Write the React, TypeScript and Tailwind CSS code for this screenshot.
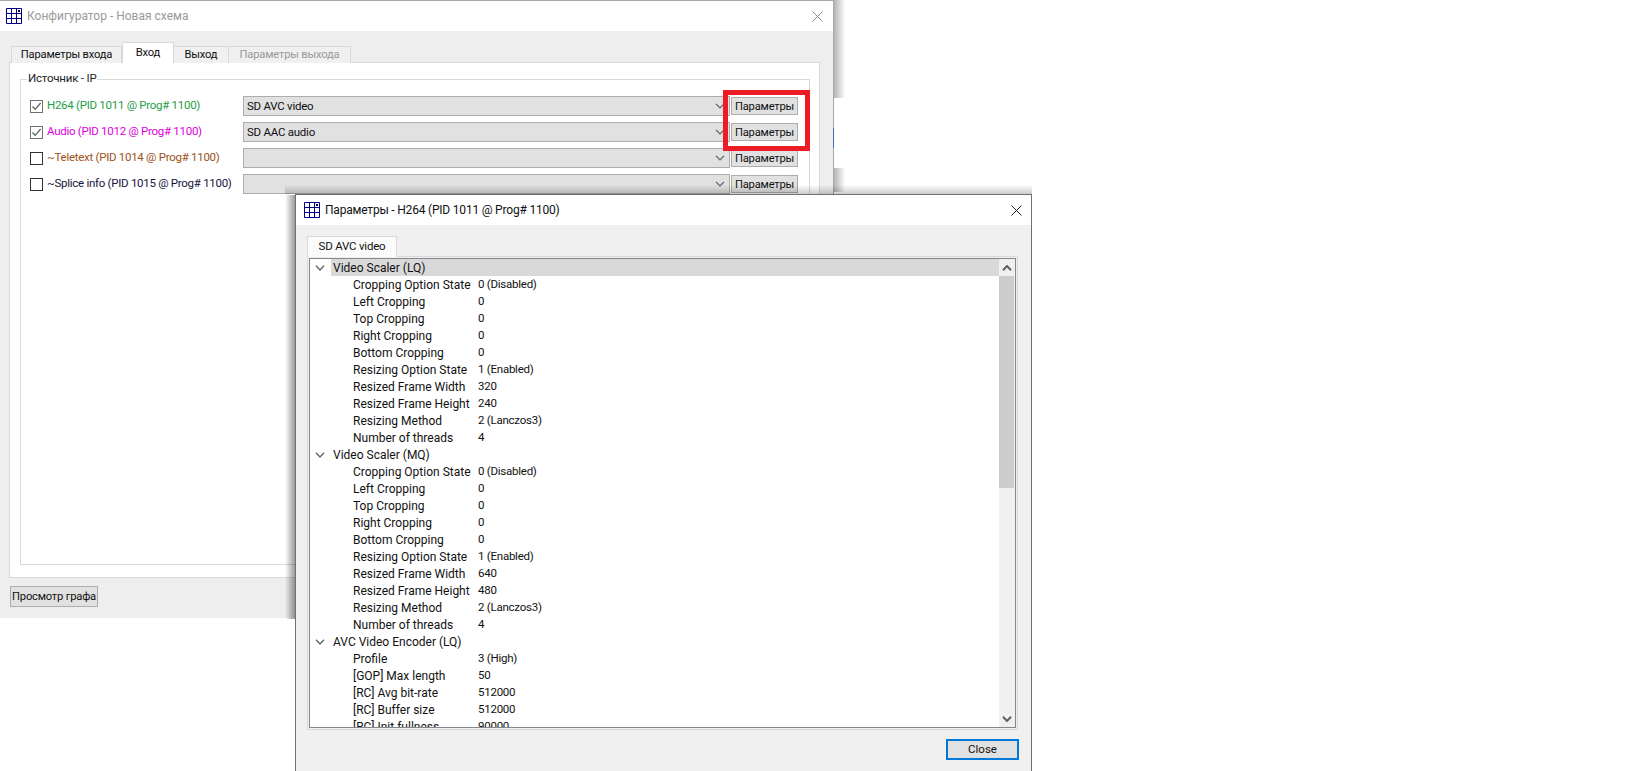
const font = "font-['Roboto',sans-serif] text-[11.5px] leading-none";

function GridIcon() {
  return (
    <svg width="16" height="16" viewBox="0 0 16 16" className="shrink-0">
      <path d="M.5.5h15v15H.5zM5.5.5v15M10.5.5v15M.5 5.5h15M.5 10.5h15" fill="none" stroke="#000080" strokeWidth="1" />
      <rect x="12" y="2" width="2" height="2" fill="#000080" />
    </svg>
  );
}

function Chevron({ className = "", up = false, color = "#606060", w = 1.2 }: { className?: string; up?: boolean; color?: string; w?: number }) {
  return (
    <svg width="10" height="6" viewBox="0 0 10 6" className={className}>
      <path d={up ? "M1 5.2 5 1l4 4.2" : "M1 .8 5 5l4-4.2"} fill="none" stroke={color} strokeWidth={w} />
    </svg>
  );
}

function Btn({ children, w, h, pad = "pt-[1px]" }: { children: string; w: string; h: string; pad?: string }) {
  return (
    <div className={`${w} ${h} ${pad} flex items-center justify-center whitespace-nowrap border border-[#adadad] bg-[#e1e1e1] text-[11.2px] tracking-[-0.2px] text-[#101010]`}>{children}</div>
  );
}

const sources = [
  { label: "H264 (PID 1011 @ Prog# 1100)", color: "text-[#1f9d45]", checked: true, value: "SD AVC video" },
  { label: "Audio (PID 1012 @ Prog# 1100)", color: "text-[#dc00dc]", checked: true, value: "SD AAC audio" },
  { label: "~Teletext (PID 1014 @ Prog# 1100)", color: "text-[#9c5217]", checked: false, value: "" },
  { label: "~Splice info (PID 1015 @ Prog# 1100)", color: "text-[#14143c]", checked: false, value: "" },
];

function SourceRow({ s }: { s: (typeof sources)[number] }) {
  return (
    <div className="flex h-5 items-center">
      <div className="flex w-[213px] shrink-0 items-center gap-[4px]">
        <div className={`flex h-[13px] w-[13px] shrink-0 items-center justify-center border bg-white ${s.checked ? "border-[#707070]" : "border-[#333333]"}`}>
          {s.checked && (
            <svg width="11" height="11" viewBox="0 0 11 11">
              <path d="M1.5 5.5 4.2 8.3 9.6 2" fill="none" stroke="#606060" strokeWidth="1.3" />
            </svg>
          )}
        </div>
        <span className={`${s.color} whitespace-nowrap tracking-[-0.28px]`}>{s.label}</span>
      </div>
      <div className="flex h-5 w-[487px] items-center justify-between border border-[#adadad] bg-[#e1e1e1] pl-[3px] pr-[4px] text-[11.5px] tracking-[-0.25px] text-[#101010]">
        <span className="pt-[2px]">{s.value}</span>
        <Chevron />
      </div>
      <div className="ml-[1px]">
        <Btn w="w-[67px]" h="h-[18px]" pad="pt-[2px]">Параметры</Btn>
      </div>
    </div>
  );
}

type TreeRow = { g?: boolean; k: string; v?: string; sel?: boolean };

const scaler = (name: string, w: string, h: string, sel = false): TreeRow[] => [
  { g: true, k: name, sel },
  { k: "Cropping Option State", v: "0 (Disabled)" },
  { k: "Left Cropping", v: "0" },
  { k: "Top Cropping", v: "0" },
  { k: "Right Cropping", v: "0" },
  { k: "Bottom Cropping", v: "0" },
  { k: "Resizing Option State", v: "1 (Enabled)" },
  { k: "Resized Frame Width", v: w },
  { k: "Resized Frame Height", v: h },
  { k: "Resizing Method", v: "2 (Lanczos3)" },
  { k: "Number of threads", v: "4" },
];

const rows: TreeRow[] = [
  ...scaler("Video Scaler (LQ)", "320", "240", true),
  ...scaler("Video Scaler (MQ)", "640", "480"),
  { g: true, k: "AVC Video Encoder (LQ)" },
  { k: "Profile", v: "3 (High)" },
  { k: "[GOP] Max length", v: "50" },
  { k: "[RC] Avg bit-rate", v: "512000" },
  { k: "[RC] Buffer size", v: "512000" },
  { k: "[RC] Init fullness", v: "90000" },
];

function Row({ r }: { r: TreeRow }) {
  if (r.g) {
    return (
      <div className="flex h-[17px] shrink-0 items-center pl-[5px] text-[12px] text-[#111111]">
        <Chevron color="#666666" w={1.4} />
        <div className={`ml-[6px] flex h-[17px] flex-1 items-center pl-[2px] ${r.sel ? "bg-[#d9d9d9]" : ""}`}>{r.k}</div>
      </div>
    );
  }
  return (
    <div className="flex h-[17px] shrink-0 items-center pl-[43px] text-[12px] text-[#111111]">
      <span className="w-[125px] whitespace-nowrap">{r.k}</span>
      <span className="text-[11.5px] tracking-[-0.25px]">{r.v}</span>
    </div>
  );
}

function MainWindow() {
  return (
    <div className="absolute left-0 top-0 flex h-[618px] w-[834px] flex-col border-r border-t border-[#a8a8a8]">
      <div className="flex h-[30px] shrink-0 items-center bg-white pl-[6px] pr-[10px] text-[12px] text-[#9a9a9a]">
        <GridIcon />
        <span className="ml-[5px] flex-1">Конфигуратор - Новая схема</span>
        <svg width="11" height="11" viewBox="0 0 11 11"><path d="M.5.5l10 10M10.5.5l-10 10" stroke="#8a8a8a" fill="none" /></svg>
      </div>
      <div className="flex flex-1 flex-col bg-[#eeeeee] pl-[9px] pr-[14px] pt-[11px]">
        <div className="relative z-10 flex h-[21px] items-end pl-[2px] text-[11.2px] tracking-[-0.2px]">
          <div className="flex h-[17px] w-[111px] items-center justify-center border border-b-0 border-[#d9d9d9] bg-[#f0f0f0] text-[#111111]">Параметры входа</div>
          <div className="flex h-[21px] w-[52px] items-center justify-center border border-b-0 border-[#d9d9d9] bg-white pb-[1px] text-[#111111]">Вход</div>
          <div className="flex h-[17px] w-[55px] items-center justify-center border border-b-0 border-l-0 border-[#d9d9d9] bg-[#f0f0f0] text-[#111111]">Выход</div>
          <div className="flex h-[17px] w-[122px] items-center justify-center border border-b-0 border-l-0 border-[#d9d9d9] bg-[#f0f0f0] text-[#9a9a9a]">Параметры выхода</div>
        </div>
        <div className="-mt-px h-[516px] w-[811px] border border-[#d9d9d9] bg-white pl-[10px] pr-[9px] pt-[16px]">
          <div className="relative h-[486px] w-[790px] border border-[#d9d9d9] pl-[9px] pt-[16px]">
            <span className="absolute -top-[7px] left-[6px] bg-white px-[1px] tracking-[-0.2px] text-[#222222]">Источник - IP</span>
            <div className="flex flex-col gap-[6px]">
              {sources.map((s) => <SourceRow key={s.label} s={s} />)}
            </div>
          </div>
        </div>
        <div className="ml-[1px] mt-[8px]">
          <Btn w="w-[88px]" h="h-[21px]">Просмотр графа</Btn>
        </div>
      </div>
      {/* annotation */}
      <div className="absolute left-[723px] top-[89px] h-[61px] w-[87px] border-[5px] border-[#ed1c24]" />
      {/* window shadow pieces */}
      <div className="absolute left-[834px] top-[-1px] h-[98px] w-[11px] bg-linear-to-r from-[#b4b4b4] to-white" />
      <div className="absolute left-[834px] top-[167px] h-[24px] w-[11px] bg-linear-to-r from-[#b4b4b4] to-white" />
      <div className="absolute left-[833px] top-[127px] h-[20px] w-[1px] bg-[#3f6fb0]" />
    </div>
  );
}

function ParamWindow() {
  return (
    <div className="absolute left-[295px] top-[194px] flex h-[577px] w-[737px] flex-col border-x border-t border-[#707070]">
      <div className="absolute -left-[11px] top-0 h-[424px] w-[10px] bg-linear-to-l from-black/40 to-transparent" />
      <div className="absolute -left-[11px] -top-[10px] h-[9px] w-[747px] bg-linear-to-t from-black/20 to-transparent" />
      <div className="flex h-[30px] shrink-0 items-center bg-white pl-[8px] pr-[9px] text-[12px] tracking-[-0.2px] text-[#111111]">
        <GridIcon />
        <span className="ml-[5px] flex-1">Параметры - H264 (PID 1011 @ Prog# 1100)</span>
        <svg width="11" height="11" viewBox="0 0 11 11"><path d="M.5.5l10 10M10.5.5l-10 10" stroke="#222222" fill="none" /></svg>
      </div>
      <div className="flex flex-1 flex-col bg-[#f0f0f0] pl-[11px] pt-[11px]">
        <div className="relative z-10 -mb-px flex h-[21px] w-[90px] items-center justify-center border border-b-0 border-[#d9d9d9] bg-[#fbfbfb] tracking-[-0.2px] text-[#111111]">SD AVC video</div>
        <div className="h-[474px] w-[711px] border border-[#d9d9d9] p-[1px]">
          <div className="flex h-[470px] w-[707px] border border-[#828790] bg-white">
            <div className="flex min-w-0 flex-1 flex-col overflow-hidden">
              {rows.map((r, i) => <Row key={i} r={r} />)}
            </div>
            <div className="flex w-[16px] shrink-0 flex-col bg-[#f0f0f0]">
              <div className="flex h-[17px] items-center justify-center"><Chevron up w={2} /></div>
              <div className="h-[212px] w-[15px] bg-[#cdcdcd]" />
              <div className="flex-1" />
              <div className="flex h-[17px] items-center justify-center"><Chevron w={2} /></div>
            </div>
          </div>
        </div>
        <div className="ml-[639px] mt-[9px]">
          <div className="flex h-[21px] w-[73px] items-center justify-center border-2 border-[#0078d7] bg-[#e1e1e1] pt-[1px] text-[#111111]">Close</div>
        </div>
      </div>
    </div>
  );
}

export default function App() {
  return (
    <div className={`relative h-[771px] w-[1632px] overflow-hidden bg-white ${font}`}>
      <MainWindow />
      <ParamWindow />
    </div>
  );
}
